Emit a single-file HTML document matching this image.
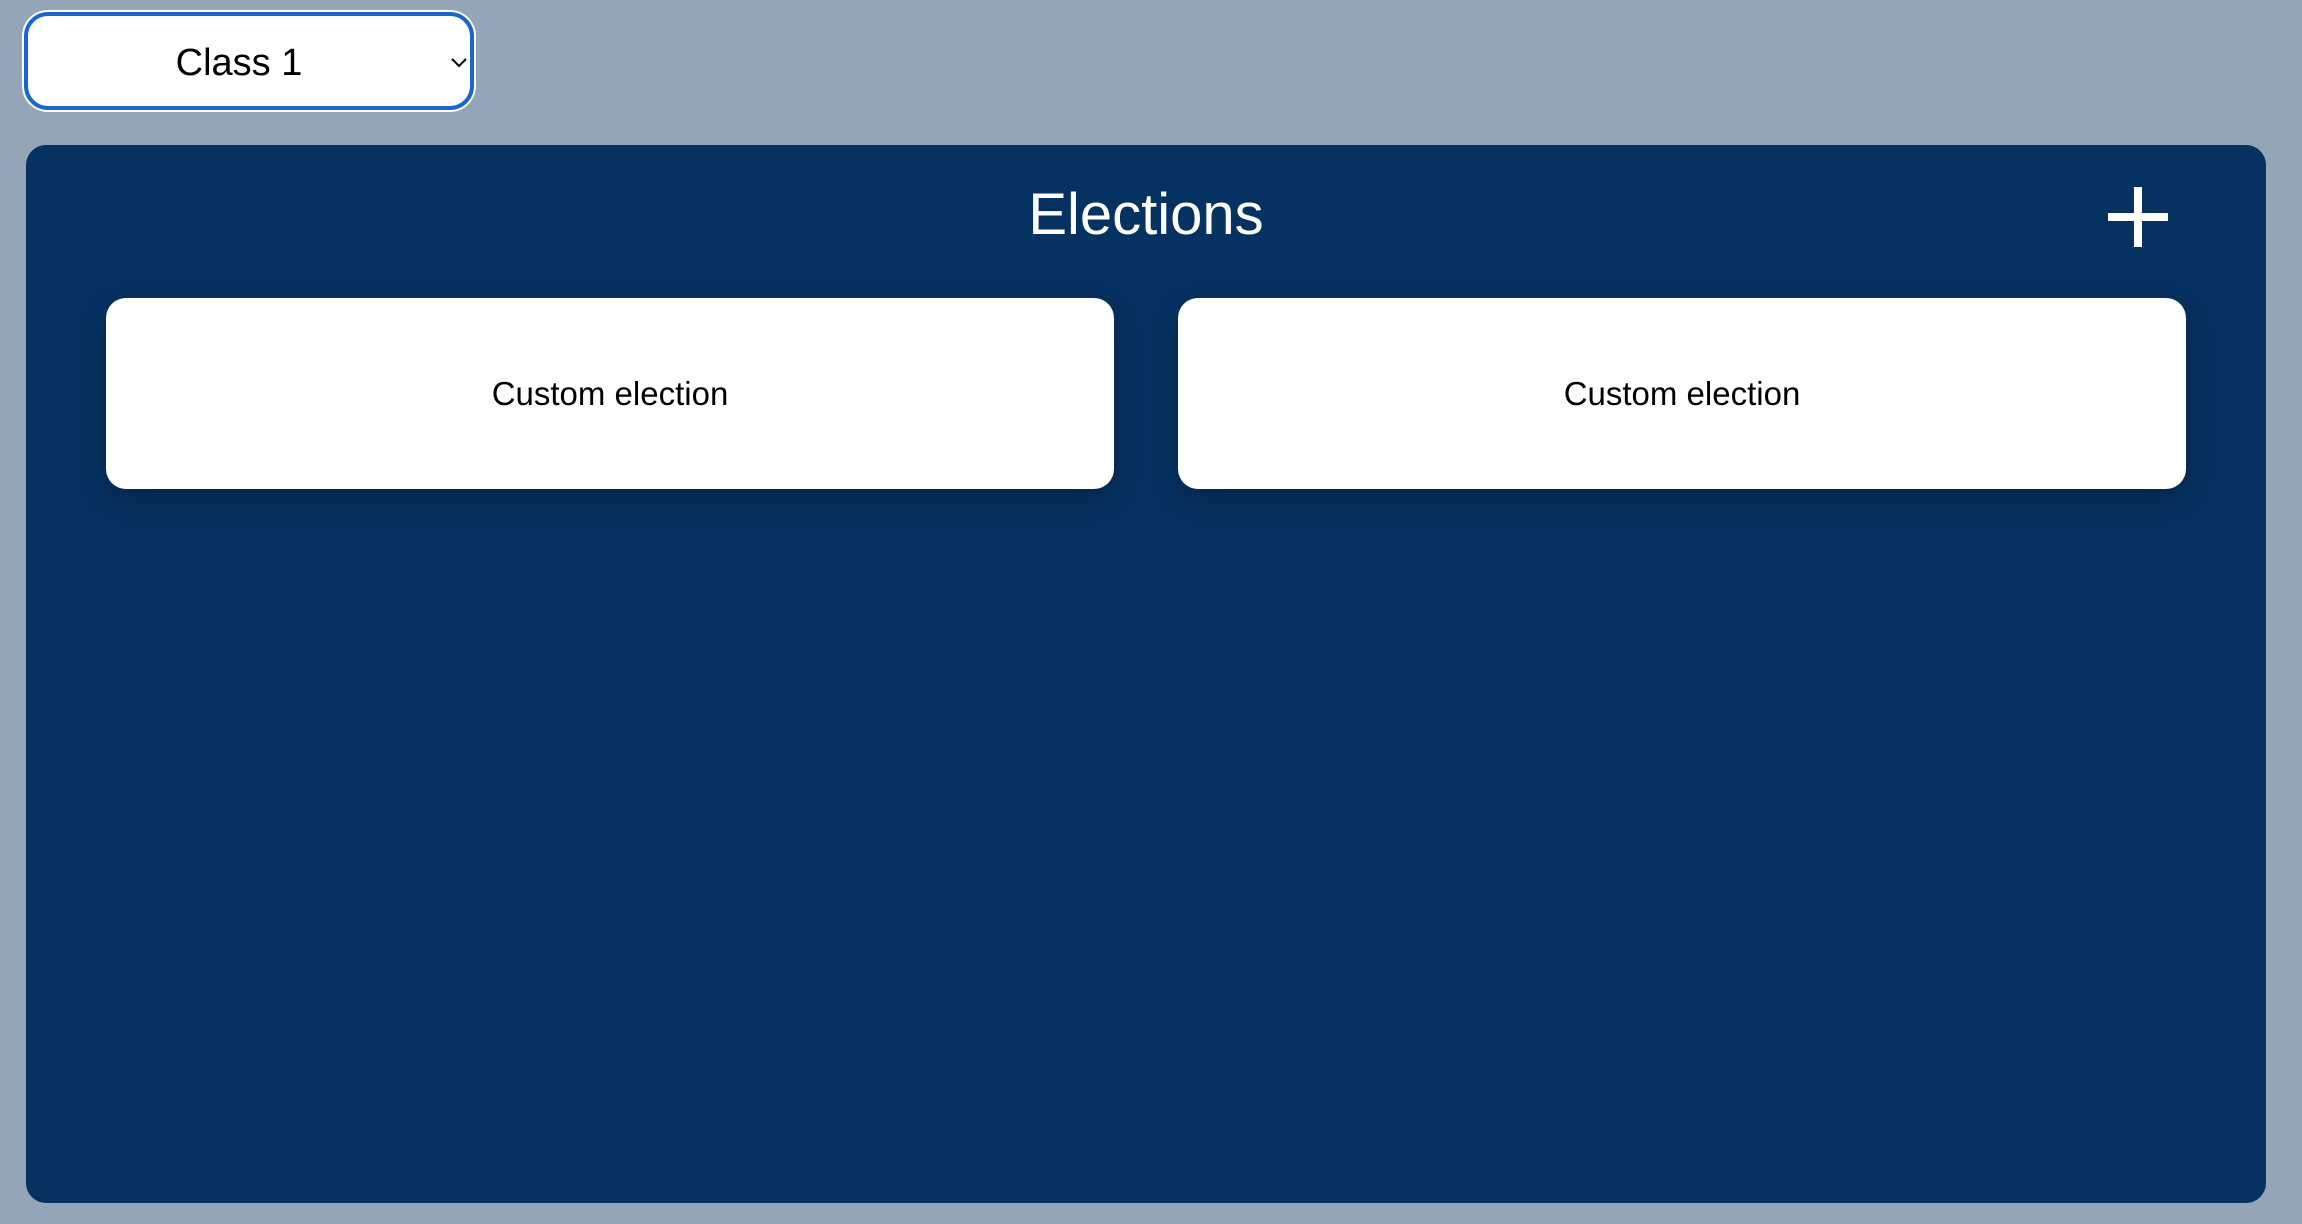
<!DOCTYPE html>
<html><head><meta charset="utf-8"><style>
html,body{margin:0;padding:0;width:2302px;height:1224px;background:#95a5b8;font-family:"Liberation Sans",sans-serif;overflow:hidden;position:relative}
.sel{position:absolute;left:24px;top:12px;width:450px;height:98px;box-sizing:border-box;border:4px solid #1a66cc;border-radius:24px;background:#fff;box-shadow:0 0 0 2px #fff}
.sel span{position:absolute;left:0;right:20px;top:2px;bottom:0;line-height:90px;text-align:center;font-size:38px;color:#000}
.chev{position:absolute;left:421px;top:40px}
.panel{position:absolute;left:26px;top:145px;width:2240px;height:1058px;background:#063262;border-radius:20px}
.title{position:absolute;left:0;right:10px;top:180px;text-align:center;color:#fff;font-size:58px;line-height:70px}
.plusv{position:absolute;left:2134px;top:187px;width:8px;height:60px;background:#fff}
.plush{position:absolute;left:2108px;top:213px;width:60px;height:8px;background:#fff}
.card{position:absolute;top:298px;height:191px;width:1008px;background:#fff;border-radius:20px;box-shadow:0 10px 30px rgba(0,0,0,.25);text-align:center;line-height:191px;font-size:33px;color:#000}
</style></head><body>
<div class="sel"><span>Class 1</span><svg class="chev" width="20" height="14" viewBox="0 0 20 14"><path d="M3 3 L10 10 L17 3" fill="none" stroke="#000" stroke-width="2"/></svg></div>
<div class="panel"></div>
<div class="title">Elections</div>
<div class="plusv"></div><div class="plush"></div>
<div class="card" style="left:106px">Custom election</div>
<div class="card" style="left:1178px">Custom election</div>
</body></html>
